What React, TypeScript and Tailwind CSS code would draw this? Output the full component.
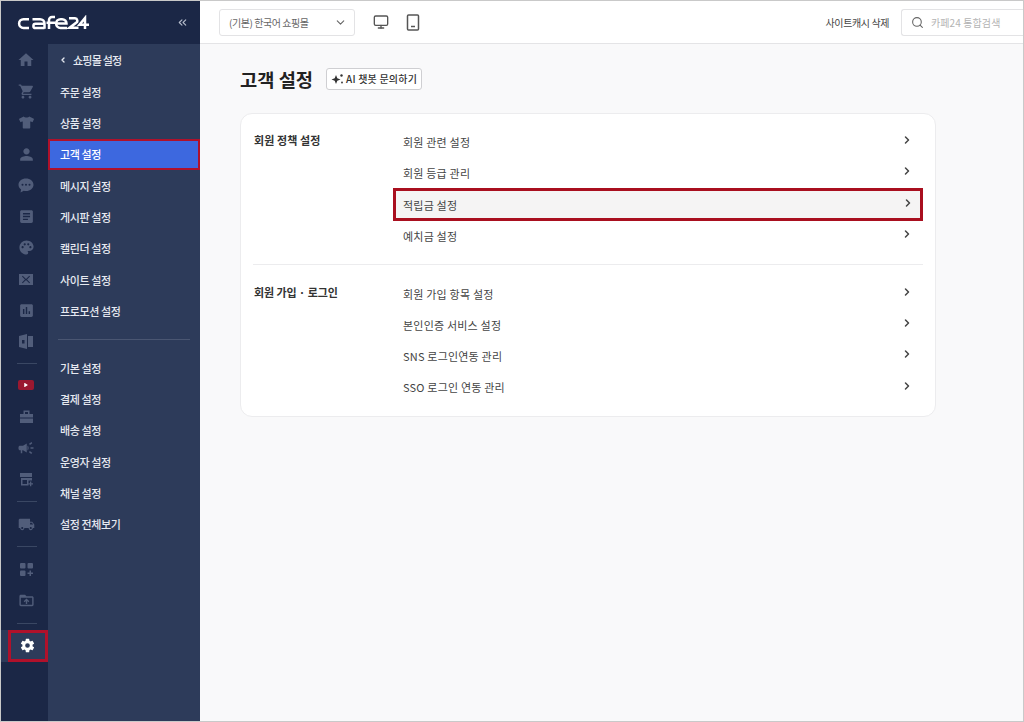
import React from "react";
import { MdHome, MdShoppingCart, MdPerson, MdArticle, MdPalette, MdInsertChart, MdCampaign, MdLocalShipping, MdDriveFolderUpload } from "react-icons/md";
import { FaTshirt, FaPlay } from "react-icons/fa";
import { IoSettingsSharp } from "react-icons/io5";
import { ChevronRight, ChevronLeft, ChevronDown, ChevronsLeft, Search, Monitor } from "lucide-react";

const font = "font-['Noto_Sans_CJK_KR','Noto_Sans',sans-serif]";

function Logo() {
  return (
    <svg width="72" height="16" viewBox="0 0 72 16" fill="none" stroke="#fff" strokeWidth="2.5" aria-label="cafe24">
      <path d="M12 4.200 H6.500 a4.400 4.400 0 0 0 0 8.800 H12" />
      <path d="M27.500 13.800 V8.600 a4.400 4.400 0 0 0 -4.400 -4.400 H15.500 M27.500 8.800 H18.500 a2.100 2.100 0 0 0 0 4.200 H27.500" />
      <path d="M32 14 V5 a3 3 0 0 1 3 -3 H38 M29.500 7.800 H38" />
      <path d="M50 13 H43.500 a4.400 4.400 0 0 1 0 -8.800 H45 a4.400 4.400 0 0 1 4.500 4.400 H39.500" />
      <path d="M52 3.200 H58 a2.500 2.500 0 0 1 1 4.700 L52.500 12.800 H61.500" />
      <path d="M68 13.900 V3 L62.500 9.700 H72" />
    </svg>
  );
}

function Bag() {
  return (
    <svg width="15" height="15" viewBox="0 0 15 15" fill="currentColor">
      <path fillRule="evenodd" d="M4.500 1.500h6V5H14v3.500H1V5h3.500zM6 3v2h3V3z" />
      <path d="M1 9.500h13V14H1z" />
    </svg>
  );
}

function Shop() {
  return (
    <svg width="15" height="15" viewBox="0 0 15 15" fill="currentColor">
      <path d="M1 1h12v4H1z" />
      <path fillRule="evenodd" d="M2 6h11v2.500H9.500v5H2zM3.500 8v4H8V8z" />
      <path d="M11 9.500h1.300v1.700H14v1.300h-1.700v1.700H11v-1.700H9.300v-1.300H11z" />
    </svg>
  );
}

function Apps() {
  return (
    <svg width="15" height="15" viewBox="0 0 15 15" fill="currentColor">
      <rect x="1" y="1" width="5.500" height="5.500" rx="1" />
      <rect x="8.500" y="1" width="5.500" height="5.500" rx="1" />
      <rect x="1" y="8.500" width="5.500" height="5.500" rx="1" />
      <path d="M10.500 8.500h1.500v2h2V12h-2v2h-1.500v-2h-2v-1.500h2z" />
    </svg>
  );
}

function Mailer() {
  return (
    <svg width="14" height="11" viewBox="0 0 14 11" fill="currentColor">
      <path d="M0 0h14v11H0zM3 2.500l3 3-3 3 .7.700 3-3 .3.300.3-.3 3 3 .7-.7-3-3 3-3-.7-.7L7 5 3.700 1.800z" fillRule="evenodd" />
    </svg>
  );
}

function Doc() {
  return (
    <svg width="14" height="15" viewBox="0 0 14 15" fill="currentColor">
      <path d="M0 2l8-2v15l-8-2zM9 2h5v11H9zM3 6h2.500v3.500H3z" fillRule="evenodd" />
    </svg>
  );
}

function Chat() {
  return (
    <svg width="16" height="15" viewBox="0 0 16 15" fill="currentColor">
      <path fillRule="evenodd" d="M8 .5c4.200 0 7.500 2.700 7.500 6.200S12.200 13 8 13c-.8 0-1.500-.1-2.200-.3L2.500 14.500l.6-3C1.500 10.300.5 8.600.5 6.700.5 3.200 3.800.5 8 .5zM4.500 5.700a1 1 0 1 0 0 2 1 1 0 0 0 0-2zm3.500 0a1 1 0 1 0 0 2 1 1 0 0 0 0-2zm3.500 0a1 1 0 1 0 0 2 1 1 0 0 0 0-2z" />
    </svg>
  );
}

function Rail({ children }: { children: React.ReactNode }) {
  return <div className="flex h-[31.3px] w-full shrink-0 items-center justify-center pl-[3px] text-[#515d7a]">{children}</div>;
}

function RailLine({ tight }: { tight?: boolean }) {
  return <div className={tight ? "my-[5.500px] ml-[16px] h-px w-[20px] shrink-0 bg-[#3a4763]" : "my-[6.500px] ml-[16px] h-px w-[20px] shrink-0 bg-[#3a4763]"} />;
}

function Sub({ label, active }: { label: string; active?: boolean }) {
  return (
    <div
      className={
        active
          ? "flex h-[31.3px] items-center border-2 border-[#b0112b] bg-[#3d68df] pl-[10px] text-[11px] font-medium tracking-[-0.4px] text-white"
          : "flex h-[31.3px] items-center pl-[12px] text-[11px] font-medium tracking-[-0.4px] text-[#e6e9f0]"
      }
    >
      {label}
    </div>
  );
}

function Row({ label, hl }: { label: string; hl?: boolean }) {
  return (
    <div
      className={
        hl
          ? "-mx-[10px] -my-[0.85px] flex h-[33px] items-center justify-between border-[3px] border-[#a90f1f] bg-[#f5f4f4] pl-[7px] pr-[6px] text-[#444]"
          : "flex h-[31.3px] items-center justify-between pr-[0px] text-[#444]"
      }
    >
      <span className="text-[11px] tracking-[0.2px]">{label}</span>
      <ChevronRight size={12} strokeWidth={3} className="-translate-y-[2px] text-[#444]" />
    </div>
  );
}

export default function App() {
  return (
    <div className={`${font} flex h-[722px] w-[1024px] overflow-hidden border border-[#c9c9c9] bg-[#f9f9fa]`}>
      <aside className="flex w-[199px] shrink-0 flex-col bg-[#1b2746]">
        <div className="flex h-[43px] shrink-0 items-center justify-between pl-[16px] pr-[11px]">
          <Logo />
          <ChevronsLeft size={13} className="text-[#b6bdcc]" />
        </div>
        <div className="flex min-h-0 flex-1">
          <nav className="flex w-[47px] shrink-0 flex-col pt-[0.500px]">
            <Rail><MdHome size={18} /></Rail>
            <Rail><MdShoppingCart size={17} /></Rail>
            <Rail><FaTshirt size={15} /></Rail>
            <Rail><MdPerson size={19} /></Rail>
            <Rail><Chat /></Rail>
            <Rail><MdArticle size={17} /></Rail>
            <Rail><MdPalette size={17} /></Rail>
            <Rail><Mailer /></Rail>
            <Rail><MdInsertChart size={17} /></Rail>
            <Rail><Doc /></Rail>
            <RailLine tight />
            <Rail>
              <div className="flex h-[10px] w-[16px] items-center justify-center rounded-[2px] bg-[#9a1830]">
                <FaPlay size={4} className="text-white" />
              </div>
            </Rail>
            <Rail><Bag /></Rail>
            <Rail><MdCampaign size={18} /></Rail>
            <Rail><Shop /></Rail>
            <RailLine />
            <Rail><MdLocalShipping size={17} /></Rail>
            <RailLine />
            <Rail><Apps /></Rail>
            <Rail><MdDriveFolderUpload size={17} /></Rail>
            <div className="my-[6px] ml-[16px] h-px w-[20px] shrink-0 bg-[#3a4763]" />
            <div className="flex h-[32px] w-full shrink-0 bg-[#2d3b5a]">
              <div className="ml-[7px] flex flex-1 items-center justify-center border-[3px] border-[#b0112b] pr-[1px] text-white">
                <IoSettingsSharp size={15} />
              </div>
            </div>
          </nav>
          <div className="flex-1 bg-[#2d3b5a]">
            <div className="flex h-[32.500px] items-center gap-[6px] pl-[11px] text-[11px] font-medium tracking-[-0.8px] text-[#e6e9f0]">
              <ChevronLeft size={8} strokeWidth={4} />
              쇼핑몰 설정
            </div>
            <Sub label="주문 설정" />
            <Sub label="상품 설정" />
            <Sub label="고객 설정" active />
            <Sub label="메시지 설정" />
            <Sub label="게시판 설정" />
            <Sub label="캘린더 설정" />
            <Sub label="사이트 설정" />
            <Sub label="프로모션 설정" />
            <div className="mx-[10px] my-[12.300px] h-px bg-[#4a5672]" />
            <Sub label="기본 설정" />
            <Sub label="결제 설정" />
            <Sub label="배송 설정" />
            <Sub label="운영자 설정" />
            <Sub label="채널 설정" />
            <Sub label="설정 전체보기" />
          </div>
        </div>
      </aside>
      <div className="flex min-w-0 flex-1 flex-col">
        <header className="flex h-[43px] shrink-0 items-center border-b border-[#e4e4e6] bg-white pl-[19px]">
          <div className="flex h-[27px] w-[136px] items-center justify-between rounded-[3px] border border-[#e3e3e5] pl-[9px] pr-[7px] text-[10px] tracking-[-0.45px] text-[#666]">
            <span>(기본) 한국어 쇼핑몰</span>
            <ChevronDown size={13} className="text-[#666]" />
          </div>
          <Monitor size={16} className="ml-[18px] text-[#555]" />
          <svg width="14" height="17" viewBox="0 0 14 17" fill="none" stroke="#555" strokeWidth="1.500" className="ml-[17px]">
            <rect x="1.500" y="1" width="11" height="15" rx="1" />
            <path d="M5 12.500h4" />
          </svg>
          <span className="ml-auto text-[10px] tracking-[-0.4px] text-[#444]">사이트캐시 삭제</span>
          <div className="ml-[12px] flex h-[27px] w-[122px] items-center gap-[7px] rounded-l-[3px] border border-r-0 border-[#e3e3e5] pl-[9px] text-[10px] tracking-[0.1px] text-[#b3b3b3]">
            <Search size={13} className="text-[#666]" />
            카페24 통합검색
          </div>
        </header>
        <main className="px-[40px] pt-[21px]">
          <div className="flex items-center gap-[13px]">
            <h1 className="text-[18.700px] font-bold leading-[27px] text-[#222]">고객 설정</h1>
            <button className="flex h-[22px] items-center gap-[2px] rounded-[3px] border border-[#cfcfd2] bg-white px-[4px] text-[10px] font-medium tracking-[0.2px] text-[#333]">
              <svg width="13" height="12" viewBox="0 0 13 12" fill="#333">
                <path d="M5 2 L6.300 5.200 L9.500 6.500 L6.300 7.800 L5 11 L3.700 7.800 L.5 6.500 L3.700 5.200z" />
                <circle cx="10.500" cy="2.500" r="1.200" />
                <circle cx="11" cy="9.500" r="0.900" />
              </svg>
              AI 챗봇 문의하기
            </button>
          </div>
          <section className="mt-[21px] w-[696px] rounded-[12px] border border-[#ececee] bg-white px-[12px]">
            <div className="flex border-b border-[#ececee] pb-[12.500px] pt-[12.500px]">
              <h2 className="w-[150px] shrink-0 pl-[1px] pt-[5.500px] text-[11px] font-semibold leading-[16px] tracking-[0.1px] text-[#333]">회원 정책 설정</h2>
              <div className="mr-[10px] flex-1">
                <Row label="회원 관련 설정" />
                <Row label="회원 등급 관리" />
                <Row label="적립금 설정" hl />
                <Row label="예치금 설정" />
              </div>
            </div>
            <div className="flex pb-[13px] pt-[13px]">
              <h2 className="w-[150px] shrink-0 pl-[1px] pt-[6px] text-[11px] font-semibold leading-[16px] tracking-[-0.1px] text-[#333]">회원 가입 · 로그인</h2>
              <div className="mr-[10px] flex-1">
                <Row label="회원 가입 항목 설정" />
                <Row label="본인인증 서비스 설정" />
                <Row label="SNS 로그인연동 관리" />
                <Row label="SSO 로그인 연동 관리" />
              </div>
            </div>
          </section>
        </main>
      </div>
    </div>
  );
}
